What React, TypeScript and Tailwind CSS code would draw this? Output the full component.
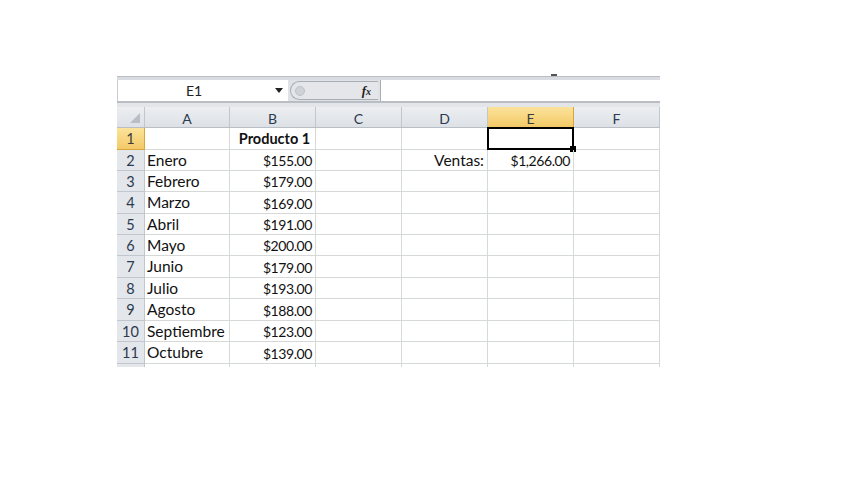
const cols = [
  { key: "A", w: "w-[85px]" },
  { key: "B", w: "w-[86px]" },
  { key: "C", w: "w-[86px]" },
  { key: "D", w: "w-[86px]" },
  { key: "E", w: "w-[86px]" },
  { key: "F", w: "w-[86px]" },
];

type Row = { n: number; h: string; a?: string; b?: string; d?: string; e?: string };

const rows: Row[] = [
  { n: 1, h: "h-[22px]", b: "Producto 1" },
  { n: 2, h: "h-[21px]", a: "Enero", b: "$155.00", d: "Ventas:", e: "$1,266.00" },
  { n: 3, h: "h-[21px]", a: "Febrero", b: "$179.00" },
  { n: 4, h: "h-[22px]", a: "Marzo", b: "$169.00" },
  { n: 5, h: "h-[21px]", a: "Abril", b: "$191.00" },
  { n: 6, h: "h-[21px]", a: "Mayo", b: "$200.00" },
  { n: 7, h: "h-[22px]", a: "Junio", b: "$179.00" },
  { n: 8, h: "h-[21px]", a: "Julio", b: "$193.00" },
  { n: 9, h: "h-[22px]", a: "Agosto", b: "$188.00" },
  { n: 10, h: "h-[21px]", a: "Septiembre", b: "$123.00" },
  { n: 11, h: "h-[22px]", a: "Octubre", b: "$139.00" },
];

const font = { fontFamily: "Lato, 'Open Sans', sans-serif" };

export default function App() {
  return (
    <div className="w-[853px] h-[480px] bg-white overflow-hidden" style={font}>
      <div className="pt-[74px] pl-[117px] w-[660px]">
        {/* tiny ribbon mark */}
        <div className="h-[2px] relative">
          <div className="absolute left-[434px] top-0 w-[6px] h-[2px] bg-[#555]" />
        </div>
        {/* top band */}
        <div className="h-[4px] bg-[#d9dce0] border-t border-[#b9bec5]" />

        {/* formula bar */}
        <div className="flex h-[21px] bg-[#dfe2e6]">
          <div className="w-[171px] bg-white border-l border-[#c8ccd2] flex items-center relative">
            <span className="w-[152px] text-center text-[14px] text-[#222]">E1</span>
            <svg width="8" height="5" viewBox="0 0 8 5" className="ml-[5px]">
              <path d="M0 0 L8 0 L4 5 Z" fill="#222" />
            </svg>
          </div>
          <div className="w-[92px] flex items-center">
            <div className="ml-[2px] w-[88px] h-[19px] rounded-l-full border border-r-0 border-[#a9aeb5] bg-[#e4e6e9] flex items-center">
              <div className="ml-[4px] w-[10px] h-[10px] rounded-full bg-[#cfd2d6] border border-[#bfc3c8]" />
              <span className="ml-auto mr-[7px] text-[13px] italic font-bold text-[#222]" style={{ fontFamily: "'Liberation Serif', serif" }}>
                f<span className="text-[10px]">x</span>
              </span>
            </div>
          </div>
          <div className="flex-1 bg-white border-l border-[#a9aeb5]" />
        </div>

        {/* separator */}
        <div className="h-[6px] bg-[#e3e5e8] border-t-2 border-[#b9bec5]" />

        {/* column headers */}
        <div className="flex h-[21px] bg-gradient-to-b from-[#eceef1] to-[#dde1e6] border-b border-[#b8bec6]">
          <div className="w-[28px] border-r border-[#c2c7ce] flex items-end justify-end pr-[4px] pb-[4px]">
            <svg width="10" height="10" viewBox="0 0 10 10">
              <path d="M10 0 L10 10 L0 10 Z" fill="#b9bec4" />
            </svg>
          </div>
          {cols.map((c) => (
            <div
              key={c.key}
              className={`${c.w} flex items-center justify-center pt-[2px] text-[14px] border-r ${
                c.key === "E"
                  ? "bg-gradient-to-b from-[#fbe39a] to-[#f3c966] border-[#d9a53f] text-[#3b3b3b]"
                  : "border-[#c2c7ce] text-[#2b3a4e]"
              }`}
            >
              {c.key}
            </div>
          ))}
        </div>

        {/* rows */}
        {rows.map((r) => (
          <div key={r.n} className={`flex ${r.h} text-[15.5px] text-[#111]`}>
            <div
              className={`w-[28px] flex items-center justify-center pt-[1px] text-[14.5px] border-r border-b ${
                r.n === 1
                  ? "bg-gradient-to-b from-[#fbe39a] to-[#f3c966] border-[#d9a53f] text-[#3b3b3b]"
                  : "bg-[#e3e6ea] border-[#c2c7ce] text-[#2b3a4e]"
              }`}
            >
              {r.n}
            </div>
            <div className="w-[85px] border-r border-b border-[#d6dad6] flex items-center pt-[1px] pl-[2px] whitespace-nowrap">
              {r.a}
            </div>
            <div
              className={`w-[86px] border-r border-b border-[#d6dad6] flex items-center pt-[1px] ${
                r.n === 1 ? "font-bold justify-center pl-[4px] text-[14.5px]" : "justify-end pr-[3px] text-[14px] tracking-[-0.03em]"
              }`}
            >
              {r.b}
            </div>
            <div className="w-[86px] border-r border-b border-[#d6dad6]" />
            <div className="w-[86px] border-r border-b border-[#d6dad6] flex items-center justify-end pt-[1px] pr-[3px]">
              {r.d}
            </div>
            <div className="w-[86px] border-r border-b border-[#d6dad6] flex items-center justify-end pt-[1px] pr-[3px] text-[14px] tracking-[-0.03em] relative">
              {r.e}
              {r.n === 1 && (
                <>
                  <div className="absolute -left-px -top-px w-[87px] h-[23px] border-2 border-black pointer-events-none" />
                  <div className="absolute -right-[3px] -bottom-[3px] w-[6px] h-[6px] bg-black" />
                </>
              )}
            </div>
            <div className="w-[86px] border-r border-b border-[#d6dad6]" />
          </div>
        ))}

        {/* partial next row */}
        <div className="flex h-[3px]">
          <div className="w-[28px] bg-[#e3e6ea] border-r border-[#c2c7ce]" />
          <div className="w-[85px] border-r border-[#d6dad6]" />
          <div className="w-[86px] border-r border-[#d6dad6]" />
          <div className="w-[86px] border-r border-[#d6dad6]" />
          <div className="w-[86px] border-r border-[#d6dad6]" />
          <div className="w-[86px] border-r border-[#d6dad6]" />
          <div className="w-[86px] border-r border-[#d6dad6]" />
        </div>
      </div>
    </div>
  );
}
